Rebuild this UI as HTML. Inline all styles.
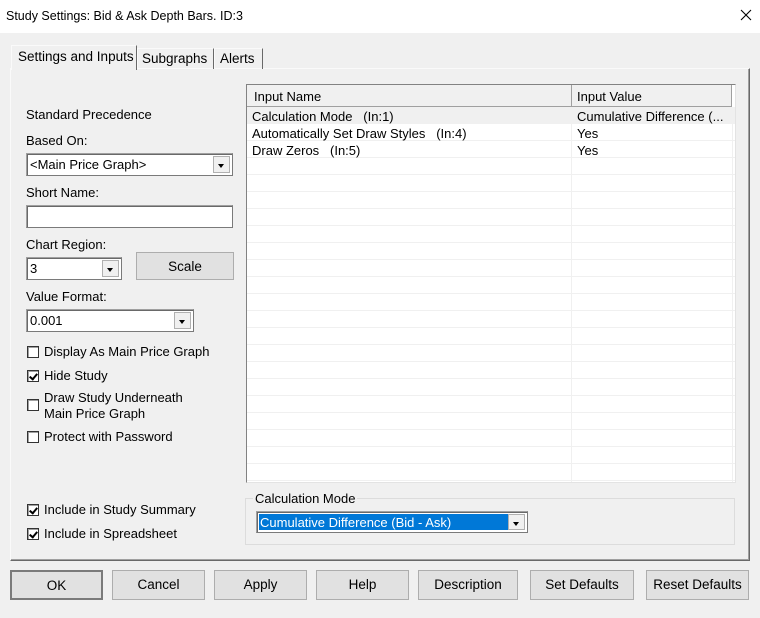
<!DOCTYPE html>
<html><head><style>
*{box-sizing:border-box;margin:0;padding:0}
body{width:760px;height:618px;background:#f0f0f0;font-family:"Liberation Sans",sans-serif;font-size:13px;color:#000;position:relative;overflow:hidden}
.a{position:absolute}
.t{position:absolute;white-space:nowrap;line-height:15px}
.btn{position:absolute;background:#e1e1e1;border:1px solid #adadad;text-align:center;line-height:27px;font-size:13.5px}
.combo{position:absolute;background:#fff;border:1px solid #7a7a7a;border-top-color:#a0a0a0;border-left-color:#a0a0a0;box-shadow:inset 1px 1px 0 #696969}
.combo .v{position:absolute;left:3px;top:3px;line-height:15px}
.combo .ar{position:absolute;right:2px;top:2px;bottom:2px;width:17px;background:#f0f0f0;border:1px solid #b0b0b0}
.combo .ar:after{content:"";position:absolute;left:4px;top:7px;border-left:3.5px solid transparent;border-right:3.5px solid transparent;border-top:4px solid #000}
.cb{position:absolute;width:12px;height:12px;background:#fff;border:1px solid #333;box-shadow:inset 1px 1px 0 #a0a0a0}
.ck:after{content:"";position:absolute;left:3px;top:1px;width:3px;height:6px;border:solid #000;border-width:0 2px 2px 0;transform:rotate(40deg)}
.row{position:absolute;left:0;right:0;height:17px;border-bottom:1px solid #f0f0f0}
</style></head><body>
<div class="a" style="left:0;top:0;width:760px;height:33px;background:#fff"></div>
<div class="t" style="left:6px;top:9px;font-size:12.5px">Study Settings: Bid &amp; Ask Depth Bars. ID:3</div>
<svg class="a" style="left:740px;top:9px" width="12" height="12"><path d="M1 1L11 11M11 1L1 11" stroke="#000" stroke-width="1.1"/></svg>

<!-- tab panel -->
<div class="a" style="left:10px;top:68px;width:740px;height:493px;border:1px solid #fafafa;border-right:1px solid #696969;border-bottom:1px solid #696969;box-shadow:inset -1px -1px 0 #a0a0a0"></div>
<div class="a" style="left:137px;top:48px;width:77px;height:21px;border:1px solid #fafafa;border-right:1px solid #696969;border-bottom:none"></div>
<div class="t" style="left:142px;top:51px;font-size:13.5px">Subgraphs</div>
<div class="a" style="left:214px;top:48px;width:49px;height:21px;border:1px solid #fafafa;border-right:1px solid #696969;border-bottom:none"></div>
<div class="t" style="left:220px;top:51px;font-size:13.5px">Alerts</div>
<div class="a" style="left:11px;top:45px;width:126px;height:25px;background:#f0f0f0;border:1px solid #fafafa;border-right:1px solid #696969;border-bottom:none"></div>
<div class="t" style="left:18px;top:49px;font-size:13.5px">Settings and Inputs</div>

<!-- left column -->
<div class="t" style="left:26px;top:107px">Standard Precedence</div>
<div class="t" style="left:26px;top:133px">Based On:</div>
<div class="combo" style="left:26px;top:153px;width:207px;height:23px"><span class="v">&lt;Main Price Graph&gt;</span><div class="ar"></div></div>
<div class="t" style="left:26px;top:185px">Short Name:</div>
<div class="combo" style="left:26px;top:205px;width:207px;height:23px"></div>
<div class="t" style="left:26px;top:237px">Chart Region:</div>
<div class="combo" style="left:26px;top:257px;width:96px;height:23px"><span class="v">3</span><div class="ar"></div></div>
<div class="btn" style="left:136px;top:252px;width:98px;height:28px">Scale</div>
<div class="t" style="left:26px;top:289px">Value Format:</div>
<div class="combo" style="left:26px;top:309px;width:168px;height:23px"><span class="v">0.001</span><div class="ar"></div></div>
<div class="cb" style="left:27px;top:346px"></div><div class="t" style="left:44px;top:344px">Display As Main Price Graph</div>
<div class="cb ck" style="left:27px;top:370px"></div><div class="t" style="left:44px;top:368px">Hide Study</div>
<div class="cb" style="left:27px;top:399px"></div><div class="t" style="left:44px;top:390px">Draw Study Underneath</div><div class="t" style="left:44px;top:406px">Main Price Graph</div>
<div class="cb" style="left:27px;top:431px"></div><div class="t" style="left:44px;top:429px">Protect with Password</div>
<div class="cb ck" style="left:27px;top:504px"></div><div class="t" style="left:44px;top:502px">Include in Study Summary</div>
<div class="cb ck" style="left:27px;top:528px"></div><div class="t" style="left:44px;top:526px">Include in Spreadsheet</div>

<!-- table -->
<div class="a" style="left:246px;top:84px;width:490px;height:399px;background:#fff;border:1px solid #828282;border-right-color:#e3e3e3;border-bottom-color:#e3e3e3;overflow:hidden">
  <div class="a" style="left:0;top:0;width:485px;height:22px;background:#f0f0f0;border-bottom:1px solid #a0a0a0;border-right:1px solid #a0a0a0"></div>
  <div class="a" style="left:324px;top:0;width:1px;height:22px;background:#a0a0a0"></div>
  <div class="t" style="left:7px;top:4px">Input Name</div>
  <div class="t" style="left:330px;top:4px">Input Value</div>
  <div class="a" style="left:0;top:22px;right:0;bottom:0">
    <div class="row" style="top:0;background:#f0f0f0"></div>
    <div class="row" style="top:17px"></div><div class="row" style="top:34px"></div><div class="row" style="top:51px"></div><div class="row" style="top:68px"></div><div class="row" style="top:85px"></div><div class="row" style="top:102px"></div><div class="row" style="top:119px"></div><div class="row" style="top:136px"></div><div class="row" style="top:153px"></div><div class="row" style="top:170px"></div><div class="row" style="top:187px"></div><div class="row" style="top:204px"></div><div class="row" style="top:221px"></div><div class="row" style="top:238px"></div><div class="row" style="top:255px"></div><div class="row" style="top:272px"></div><div class="row" style="top:289px"></div><div class="row" style="top:306px"></div><div class="row" style="top:323px"></div><div class="row" style="top:340px"></div><div class="row" style="top:357px"></div>
    <div class="a" style="left:324px;top:0;width:1px;bottom:0;background:#f0f0f0"></div>
    <div class="a" style="left:485px;top:0;width:1px;bottom:0;background:#f0f0f0"></div>
  </div>
  <div class="t" style="left:5px;top:24px">Calculation Mode &nbsp; (In:1)</div>
  <div class="t" style="left:330px;top:24px">Cumulative Difference (...</div>
  <div class="t" style="left:5px;top:41px">Automatically Set Draw Styles &nbsp; (In:4)</div>
  <div class="t" style="left:330px;top:41px">Yes</div>
  <div class="t" style="left:5px;top:58px">Draw Zeros &nbsp; (In:5)</div>
  <div class="t" style="left:330px;top:58px">Yes</div>
</div>

<!-- group box -->
<div class="a" style="left:245px;top:498px;width:490px;height:47px;border:1px solid #dcdcdc"></div>
<div class="t" style="left:253px;top:491px;background:#f0f0f0;padding:0 2px">Calculation Mode</div>
<div class="combo" style="left:256px;top:511px;width:272px;height:22px"><div class="a" style="left:2px;top:2px;width:251px;height:16px;background:#0078d7"></div><span class="v" style="color:#fff;top:3px">Cumulative Difference (Bid - Ask)</span><div class="ar"></div></div>

<!-- buttons -->
<div class="btn" style="left:10px;top:570px;width:93px;height:30px;border:2px solid #7a7a7a">OK</div>
<div class="btn" style="left:112px;top:570px;width:93px;height:30px">Cancel</div>
<div class="btn" style="left:214px;top:570px;width:93px;height:30px">Apply</div>
<div class="btn" style="left:316px;top:570px;width:93px;height:30px">Help</div>
<div class="btn" style="left:418px;top:570px;width:100px;height:30px">Description</div>
<div class="btn" style="left:530px;top:570px;width:104px;height:30px">Set Defaults</div>
<div class="btn" style="left:646px;top:570px;width:103px;height:30px">Reset Defaults</div>
</body></html>
